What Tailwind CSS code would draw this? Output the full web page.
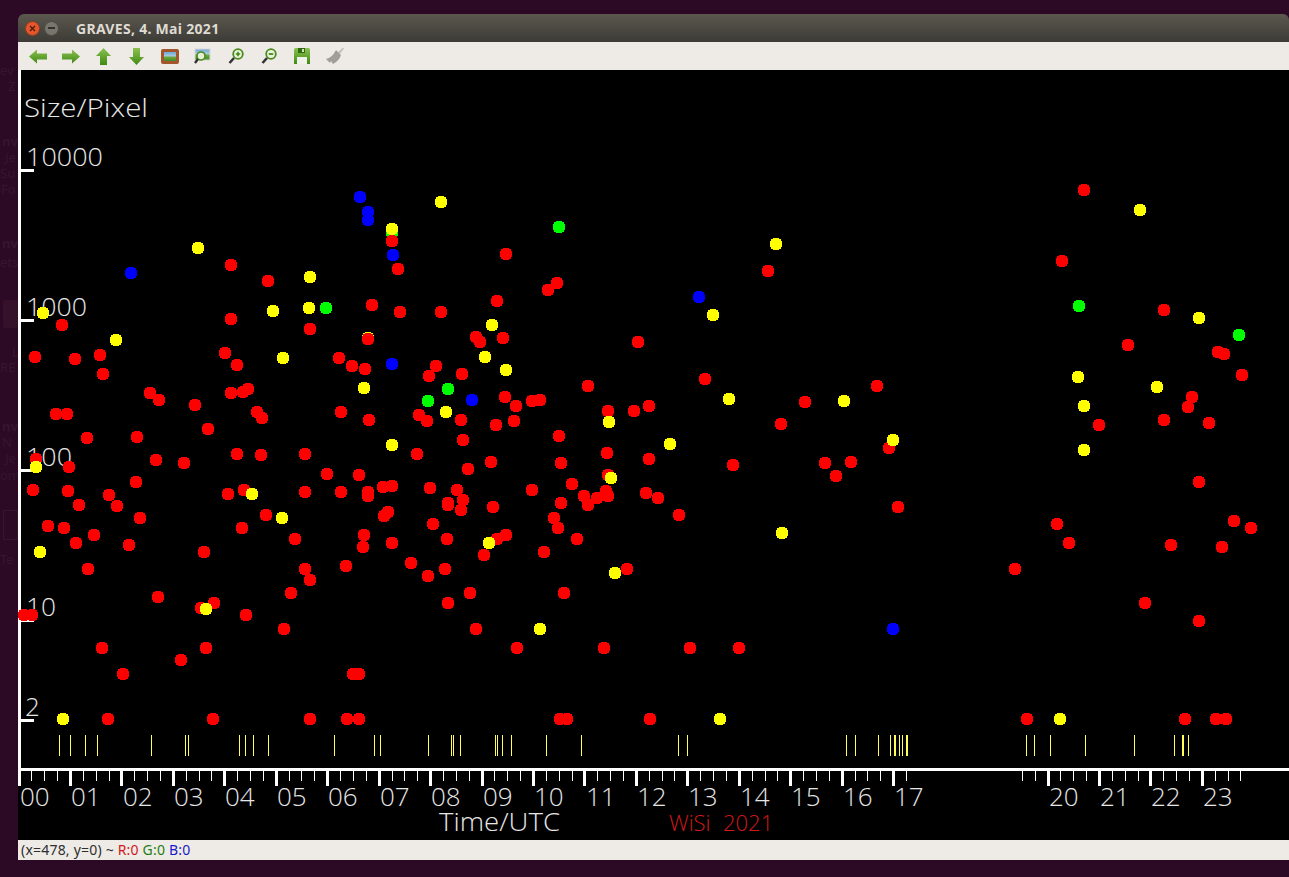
<!DOCTYPE html>
<html lang="de">
<head>
  <meta charset="UTF-8" />
  <title>GRAVES, 4. Mai 2021</title>
  <script src="https://cdn.jsdelivr.net/npm/@tailwindcss/browser@4"></script>
</head>
<body class="bg-[#2c0a26] h-[877px] overflow-hidden pt-[14px] pl-[18px] font-['Noto_Sans',sans-serif]">
  <svg width="0" height="0" class="absolute">
    <defs>
      <linearGradient id="grn" x1="0" y1="0" x2="0" y2="1"><stop offset="0" stop-color="#8cc152"/><stop offset="1" stop-color="#3f8a12"/></linearGradient>
      <linearGradient id="pic" x1="0" y1="0" x2="0" y2="1"><stop offset="0" stop-color="#6fa6d8"/><stop offset=".45" stop-color="#a9cbe0"/><stop offset=".55" stop-color="#6ea83c"/><stop offset="1" stop-color="#3f8a2a"/></linearGradient>
    </defs>
  </svg>

  <!-- desktop icon labels, only the strip left of the window shows -->
  <div class="absolute left-0 top-0 w-[18px] h-[877px] overflow-hidden text-[13px] leading-none text-[#38142f] whitespace-nowrap">
    <span class="absolute top-[64px] left-0">ev</span>
    <span class="absolute top-[80px] left-[8px]">Z</span>
    <span class="absolute top-[135px] left-[2px] font-bold">nv</span>
    <span class="absolute top-[151px] left-[5px]">Je</span>
    <span class="absolute top-[167px] left-0">Su</span>
    <span class="absolute top-[183px] left-[1px]">Fo</span>
    <span class="absolute top-[237px] left-[2px] font-bold">nv</span>
    <span class="absolute top-[256px] left-0">ets</span>
    <div class="absolute top-[300px] left-[3px] w-[15px] h-[28px] bg-[#36122a] rounded-[2px]"></div>
    <span class="absolute top-[346px] left-[12px]">L</span>
    <span class="absolute top-[361px] left-0">RE</span>
    <span class="absolute top-[420px] left-[2px] font-bold">nv</span>
    <span class="absolute top-[436px] left-[2px]">N</span>
    <span class="absolute top-[452px] left-[5px]">Je</span>
    <span class="absolute top-[469px] left-0">om</span>
    <div class="absolute top-[510px] left-[3px] w-[15px] h-[30px] border border-[#38142f]"></div>
    <span class="absolute top-[553px] left-0">Te</span>
  </div>

  <div class="relative flex flex-col h-[846px]">
    <!-- title bar -->
    <div class="h-[28px] rounded-t-[6px] bg-gradient-to-b from-[#5c584f] to-[#3c3b36] flex items-center pl-[7px]">
      <div class="w-[15px] h-[15px] rounded-full bg-[#e4562b] border border-[#8f3a1e] flex items-center justify-center">
        <svg width="7" height="7" viewBox="0 0 7 7"><path d="M1 1L6 6M6 1L1 6" stroke="#4a1c0c" stroke-width="1.3"/></svg>
      </div>
      <div class="w-[15px] h-[15px] ml-[4px] rounded-full bg-[#77756c] border border-[#4a4942] flex items-center justify-center">
        <div class="w-[7px] h-[1.5px] bg-[#33322e]"></div>
      </div>
      <span class="ml-[17px] text-[14px] tracking-[0.3px] font-bold text-[#dfdbd2] whitespace-nowrap">GRAVES, 4. Mai 2021</span>
    </div>

    <!-- toolbar -->
    <div class="h-[28px] bg-[#eeebe7] flex items-center pl-[3px]">
      <div class="w-[33px] flex justify-center"><svg width="18" height="15" viewBox="0 0 18 15"><path d="M0 7.5L8 0.5V4.5H18V10.5H8V14.5Z" fill="url(#grn)"/></svg></div>
      <div class="w-[33px] flex justify-center"><svg width="18" height="15" viewBox="0 0 18 15"><path d="M18 7.5L10 0.5V4.5H0V10.5H10V14.5Z" fill="url(#grn)"/></svg></div>
      <div class="w-[33px] flex justify-center"><svg width="15" height="17" viewBox="0 0 15 17"><path d="M7.5 0L15 8H11V17H4V8H0Z" fill="url(#grn)"/></svg></div>
      <div class="w-[33px] flex justify-center"><svg width="15" height="17" viewBox="0 0 15 17"><path d="M7.5 17L15 9H11V0H4V9H0Z" fill="url(#grn)"/></svg></div>
      <div class="w-[33px] flex justify-center"><svg width="18" height="15" viewBox="0 0 18 15"><rect width="18" height="15" rx="2" fill="#a3562c"/><rect x="3" y="3" width="12" height="9" fill="url(#pic)"/></svg></div>
      <div class="w-[33px] flex justify-center"><svg width="17" height="17" viewBox="0 0 17 17"><rect x="1" y="1" width="15" height="11" fill="url(#pic)" stroke="#d8d8d4"/><circle cx="7" cy="8" r="4" fill="#e4efd8" stroke="#4b8a1c" stroke-width="1.6"/><path d="M4 11L1 15" stroke="#333" stroke-width="2.4"/></svg></div>
      <div class="w-[33px] flex justify-center"><svg width="16" height="17" viewBox="0 0 16 17"><circle cx="10" cy="6" r="4.8" fill="#eaf2df" stroke="#4b8a1c" stroke-width="1.8"/><path d="M7.8 6H12.2M10 3.8V8.2" stroke="#3f8a12" stroke-width="1.6"/><path d="M6 10L1.5 15" stroke="#333" stroke-width="2.6"/></svg></div>
      <div class="w-[33px] flex justify-center"><svg width="16" height="17" viewBox="0 0 16 17"><circle cx="10" cy="6" r="4.8" fill="#eaf2df" stroke="#4b8a1c" stroke-width="1.8"/><path d="M7.8 6H12.2" stroke="#3f8a12" stroke-width="1.8"/><path d="M6 10L1.5 15" stroke="#333" stroke-width="2.6"/></svg></div>
      <div class="w-[33px] flex justify-center"><svg width="16" height="16" viewBox="0 0 16 16"><path d="M0 1.5Q0 0 1.5 0H14.5Q16 0 16 1.5V16H0Z" fill="url(#grn)"/><rect x="4" y="0" width="7" height="5" fill="#2f6a10"/><rect x="8" y="1" width="2" height="3" fill="#cfe3b8"/><rect x="3" y="9" width="10" height="7" fill="#f1f1ec"/></svg></div>
      <div class="w-[33px] flex justify-center"><svg width="18" height="18" viewBox="0 0 18 18"><path d="M12 5L17 0.5L18 1.5L14 7Z" fill="#c4c2bc"/><path d="M10 3L15 8Q13 14 7 17L5 14L4 16L0 12Q6 11 10 3Z" fill="#a09e98"/></svg></div>
    </div>

    <!-- plot -->
    <svg id="plot" class="block bg-black w-[1271px] h-[770px] shrink-0 font-['Open_Sans',sans-serif] font-light" viewBox="18 70 1271 770">
      <g class="fill-[#e6e6e6]" font-size="26">
        <text x="24" y="117" textLength="124" lengthAdjust="spacingAndGlyphs">Size/Pixel</text>
        <text x="26" y="166" textLength="77" lengthAdjust="spacingAndGlyphs">10000</text>
        <text x="26" y="316" textLength="61" lengthAdjust="spacingAndGlyphs">1000</text>
        <text x="26" y="466" textLength="46" lengthAdjust="spacingAndGlyphs">100</text>
        <text x="26" y="616" textLength="30" lengthAdjust="spacingAndGlyphs">10</text>
        <text x="25" y="716">2</text>
        <text x="20" y="806">00</text>
        <text x="71" y="806">01</text>
        <text x="123" y="806">02</text>
        <text x="174" y="806">03</text>
        <text x="225" y="806">04</text>
        <text x="277" y="806">05</text>
        <text x="328" y="806">06</text>
        <text x="380" y="806">07</text>
        <text x="431" y="806">08</text>
        <text x="483" y="806">09</text>
        <text x="534" y="806">10</text>
        <text x="586" y="806">11</text>
        <text x="637" y="806">12</text>
        <text x="688" y="806">13</text>
        <text x="740" y="806">14</text>
        <text x="791" y="806">15</text>
        <text x="843" y="806">16</text>
        <text x="894" y="806">17</text>
        <text x="1049" y="806">20</text>
        <text x="1100" y="806">21</text>
        <text x="1151" y="806">22</text>
        <text x="1203" y="806">23</text>
        <text x="439" y="831" textLength="121" lengthAdjust="spacingAndGlyphs">Time/UTC</text>
      </g>
      <text x="669" y="831" font-size="22" class="fill-[#d01a1a]">WiSi<tspan x="723">2021</tspan></text>
      <g id="marks" shape-rendering="crispEdges"></g>
    </svg>

    <!-- status bar -->
    <div class="h-[20px] bg-[#eeebe7] flex items-center pl-[3px] text-[14px] tracking-[0.2px] leading-none whitespace-nowrap overflow-hidden text-[#2e2e2e]">
      <span>(x=478, y=0) ~&nbsp;</span><span class="text-[#d01818]">R:0</span><span class="text-[#1e7d12]">&nbsp;G:0</span><span class="text-[#1a1ac8]">&nbsp;B:0</span>
    </div>
  </div>

  <script>
    const red = [[62,325],[231,319],[310,329],[35,357],[75,359],[100,355],[103,374],[225,353],[237,365],[339,358],[150,393],[159,400],[195,405],[231,393],[243,392],[248,389],[257,412],[262,418],[56,414],[67,414],[341,412],[208,429],[87,438],[137,437],[237,454],[261,455],[305,454],[156,460],[184,463],[36,459],[69,467],[327,474],[136,482],[33,490],[68,491],[109,495],[228,494],[244,490],[305,492],[341,492],[79,505],[117,506],[140,518],[266,515],[242,528],[48,526],[64,528],[94,535],[76,543],[129,545],[295,539],[204,552],[88,569],[305,569],[310,580],[291,593],[158,597],[214,603],[201,608],[246,615],[24,615],[32,615],[284,629],[102,648],[206,648],[181,660],[123,674],
      [372,305],[400,312],[441,312],[497,301],[548,290],[476,337],[480,342],[503,338],[638,342],[352,366],[365,369],[436,366],[429,376],[462,374],[588,386],[505,397],[516,406],[532,401],[540,400],[608,411],[634,411],[649,406],[369,420],[419,415],[427,421],[461,420],[496,425],[514,421],[559,436],[463,440],[417,454],[607,453],[491,462],[561,463],[649,459],[468,469],[359,475],[608,475],[368,492],[368,496],[383,487],[392,486],[430,488],[457,490],[463,500],[448,503],[448,505],[461,510],[493,507],[532,490],[572,484],[561,503],[584,496],[588,505],[597,498],[606,491],[608,496],[646,493],[554,518],[558,528],[388,512],[384,516],[433,524],[364,535],[363,547],[392,543],[447,539],[497,539],[506,535],[577,539],[484,555],[544,552],[346,566],[411,563],[428,576],[445,569],[627,569],[470,593],[564,593],[448,603],[476,629],[517,648],[604,648],[353,674],[359,674],
      [392,241],[506,254],[231,265],[398,269],[268,281],[557,283],[768,271],[1084,190],[1062,261],
      [705,379],[805,402],[877,386],[781,424],[733,465],[825,463],[851,462],[836,476],[889,448],[898,507],[679,515],[658,498],[690,648],[739,648],
      [1164,310],[1128,345],[1218,352],[1224,354],[1242,375],[1192,397],[1188,407],[1164,420],[1209,423],[1099,425],[1199,482],[1234,521],[1251,528],[1057,524],[1069,543],[1171,545],[1222,547],[1015,569],[1145,603],[1199,621],
      [108,719],[213,719],[310,719],[347,719],[359,719],[560,719],[567,719],[650,719],[1027,719],[1185,719],[1216,719],[1226,719]]
    const yellow = [[43,313],[116,340],[273,311],[309,308],[283,358],[36,467],[252,494],[282,518],[40,552],[206,609],[492,325],[485,357],[506,370],[364,388],[446,412],[392,445],[609,422],[611,478],[489,543],[615,573],[540,629],[441,202],[198,248],[310,277],[776,244],[1140,210],[713,315],[729,399],[844,401],[893,440],[670,444],[782,533],[1199,318],[1078,377],[1157,387],[1084,406],[1084,450],[63,719],[720,719],[1060,719]]
    const green = [[326,308],[448,389],[428,401],[559,227],[1079,306],[1239,335],[392,233]]
    const blue = [[392,364],[472,400],[360,197],[368,212],[368,220],[393,255],[131,273],[699,297],[893,629]]
    const lines = [59,70,85,97,151,185,188,239,245,253,268,334,374,380,428,451,453,460,495,497,502,511,546,581,678,687,846,855,878,890,894,895,899,902,906,907,1026,1034,1050,1085,1134,1174,1182,1183,1188]

    const marks = document.getElementById('marks')
    function add(tag, attrs) {
      const el = document.createElementNS('http://www.w3.org/2000/svg', tag)
      for (const k in attrs) el.setAttribute(k, attrs[k])
      marks.appendChild(el)
    }
    function rect(x, y, w, h, fill) { add('rect', { x, y, width: w, height: h, fill }) }

    rect(18, 70, 3, 701, '#fff')
    rect(18, 768, 1271, 3, '#fff')
    for (const y of [169, 319, 469, 619, 719]) rect(18, y, 16, 3, '#fff')

    const hour = 51.45
    for (let h = 0; h < 24; h++) {
      for (let q = 0; q < 4; q++) {
        const x = Math.round(18.5 + (h + q / 4) * hour)
        const on = h <= 16 || (h === 17 && q < 2) || (h === 19 && q >= 2) || h >= 20
        if (on) q === 0 ? rect(x - 1, 771, 3, 15, '#fff') : rect(x, 771, 1, 10, '#fff')
      }
    }
    for (const x of lines) rect(x, 735, 1, 21, '#ffff55')

    // draw order matters where dots overlap
    const groups = [['#ffff00', [[368, 338]]], ['#ff0000', red], ['#00ff00', green], ['#0000ff', blue], ['#ffff00', yellow]]
    for (const [fill, pts] of groups) {
      for (const [cx, cy] of pts) add('circle', { cx, cy, r: 6.4, fill })
    }
    add('circle', { cx: 368, cy: 339, r: 6.4, fill: '#ff0000' })
    add('circle', { cx: 392, cy: 241, r: 6.4, fill: '#ff0000' })
    add('circle', { cx: 392, cy: 229, r: 6.4, fill: '#ffff00' })
  </script>
</body>
</html>
